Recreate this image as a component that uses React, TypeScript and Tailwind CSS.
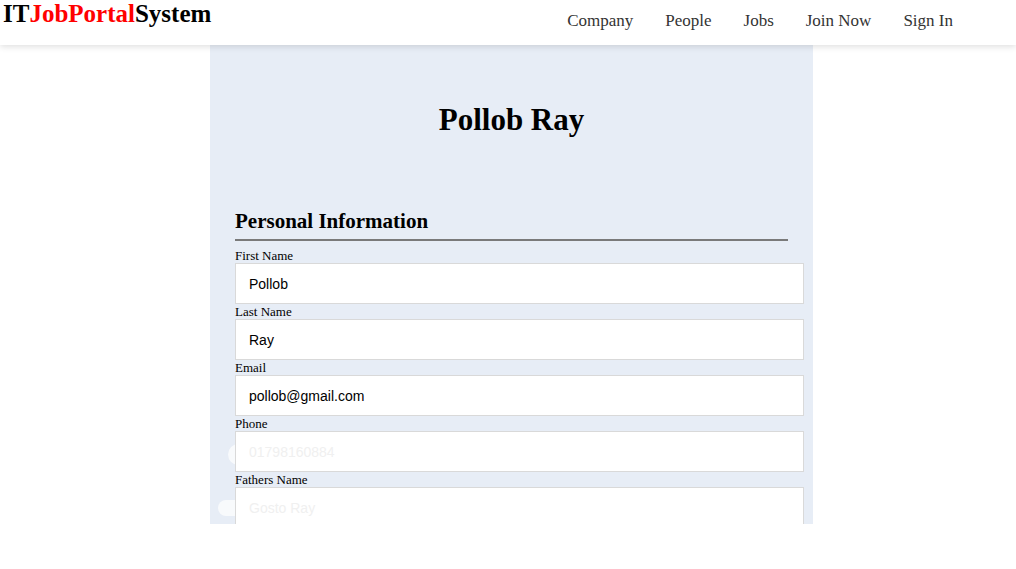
const fields = [
  { label: "First Name", value: "Pollob", faded: false, blob: "" },
  { label: "Last Name", value: "Ray", faded: false, blob: "" },
  { label: "Email", value: "pollob@gmail.com", faded: false, blob: "" },
  { label: "Phone", value: "01798160884", faded: true, blob: "left-[-7px] top-[13px] h-[21px] w-[26px]" },
  { label: "Fathers Name", value: "Gosto Ray", faded: true, blob: "left-[-17px] top-[13px] h-[16px] w-[30px]" },
];

function Navbar() {
  return (
    <nav className="relative z-10 flex h-[45px] items-start justify-between bg-white pr-[63px] shadow-[0_2px_6px_rgba(0,0,0,0.12)]">
      <a href="#" className="pl-[3px] pt-[1px] text-[25px] font-bold leading-[26px] text-black">
        IT<span className="text-[#ff0000]">JobPortal</span>System
      </a>
      <ul className="flex gap-[32px] pt-[11px] text-[17px] leading-[20px] text-[#333]">
        <li>Company</li>
        <li>People</li>
        <li>Jobs</li>
        <li>Join Now</li>
        <li>Sign In</li>
      </ul>
    </nav>
  );
}

export default function App() {
  return (
    <div className="min-h-[569px] bg-white font-['Liberation_Serif',serif]">
      <Navbar />

      {/* ---------- PROFILE PANEL ---------- */}
      <div className="ml-[210px] h-[479px] w-[603px] overflow-hidden bg-[#e7edf6]">
        <h1 className="pt-[55px] text-center text-[31px] font-bold leading-[40px] text-black">
          Pollob Ray
        </h1>

        <section className="pl-[25px] pr-[9px] pt-[68px]">
          <h2 className="mr-[16px] border-b-2 border-[#7a7a7a] pb-[5px] text-[21px] font-bold leading-[26px] text-black">
            Personal Information
          </h2>
          <div className="mt-[7px] flex flex-col">
            {fields.map((f) => (
              <div key={f.label} className="relative">
                <label className="block text-[13px] leading-[15px] text-black">{f.label}</label>
                <div className="relative">
                  {f.blob && <div className={"absolute rounded-full bg-white/70 " + f.blob} />}
                  <input
                    readOnly
                    value={f.value}
                    className={
                      "relative block h-[41px] w-full border border-[#d9d9d9] bg-white px-[13px] font-['Liberation_Sans',sans-serif] text-[14px] outline-none " +
                      (f.faded ? "text-[#f0f0f0]" : "text-black")
                    }
                  />
                </div>
              </div>
            ))}
          </div>
        </section>
      </div>
    </div>
  );
}
